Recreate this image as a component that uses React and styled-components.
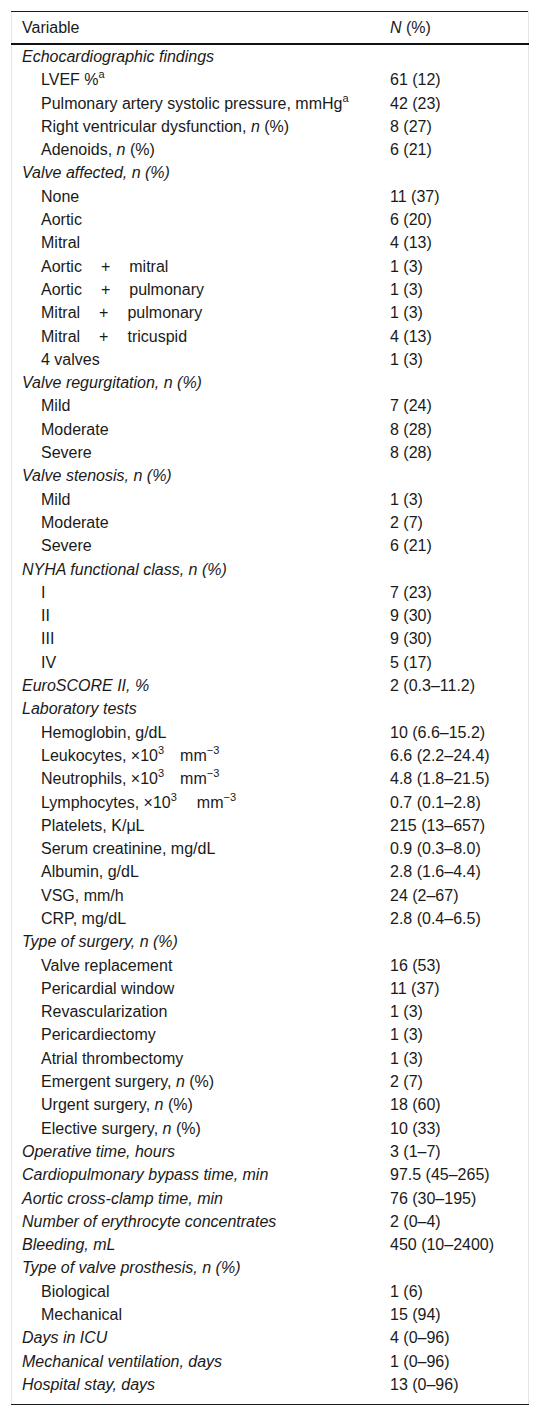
import React from 'react';
import styled, {createGlobalStyle} from 'styled-components';

const Global = createGlobalStyle`
  body {
    margin: 0;
    background: #fff;
    font-family: "Liberation Sans", Arial, sans-serif;
    color: #1a1a1a;
  }
`;

const Wrap = styled.div`
  padding: 11px 11px 10px;
`;

const Table = styled.table`
  width: 100%;
  table-layout: fixed;
  border-collapse: collapse;
  border-left: 1px solid #e6e6e6;
  border-right: 1px solid #e6e6e6;
  border-top: 1px solid #1a1a1a;
  border-bottom: 1px solid #1a1a1a;
  font-size: 16px;
`;

const Head = styled.thead`
  border-bottom: 2px solid #111;
`;

const HeadCell = styled.th`
  text-align: left;
  font-weight: normal;
  padding: 6px 10px;
  line-height: 19px;
  width: ${p => p.$w || 'auto'};
`;

const Row = styled.tr`
  &:last-child td {
    padding-bottom: 10px;
  }
`;

const Cell = styled.td`
  padding: 2px 10px 2px ${p => (p.$indent ? 29 : 10)}px;
  line-height: 19.3px;
  font-style: ${p => (p.$italic ? 'italic' : 'normal')};
  white-space: nowrap;
  vertical-align: top;
`;

const Sup = styled.sup`
  font-size: 11px;
  line-height: 0;
  vertical-align: 7px;
`;

const Gap = styled.span`
  display: inline-block;
  margin: 0 ${p => p.$w || 19}px;
`;

const N = styled.i``;

const n = <N>n</N>;

const rows = [
  {g: 'Echocardiographic findings'},
  {l: <>LVEF %<Sup>a</Sup></>, v: '61 (12)'},
  {l: <>Pulmonary artery systolic pressure, mmHg<Sup>a</Sup></>, v: '42 (23)'},
  {l: <>Right ventricular dysfunction, {n} (%)</>, v: '8 (27)'},
  {l: <>Adenoids, {n} (%)</>, v: '6 (21)'},
  {g: 'Valve affected, n (%)'},
  {l: 'None', v: '11 (37)'},
  {l: 'Aortic', v: '6 (20)'},
  {l: 'Mitral', v: '4 (13)'},
  {l: <>Aortic<Gap>+</Gap>mitral</>, v: '1 (3)'},
  {l: <>Aortic<Gap>+</Gap>pulmonary</>, v: '1 (3)'},
  {l: <>Mitral<Gap>+</Gap>pulmonary</>, v: '1 (3)'},
  {l: <>Mitral<Gap>+</Gap>tricuspid</>, v: '4 (13)'},
  {l: '4 valves', v: '1 (3)'},
  {g: 'Valve regurgitation, n (%)'},
  {l: 'Mild', v: '7 (24)'},
  {l: 'Moderate', v: '8 (28)'},
  {l: 'Severe', v: '8 (28)'},
  {g: 'Valve stenosis, n (%)'},
  {l: 'Mild', v: '1 (3)'},
  {l: 'Moderate', v: '2 (7)'},
  {l: 'Severe', v: '6 (21)'},
  {g: 'NYHA functional class, n (%)'},
  {l: 'I', v: '7 (23)'},
  {l: 'II', v: '9 (30)'},
  {l: 'III', v: '9 (30)'},
  {l: 'IV', v: '5 (17)'},
  {g: 'EuroSCORE II, %', v: '2 (0.3–11.2)'},
  {g: 'Laboratory tests'},
  {l: 'Hemoglobin, g/dL', v: '10 (6.6–15.2)'},
  {l: <>Leukocytes, ×10<Sup>3</Sup><Gap $w={8}></Gap>mm<Sup>−3</Sup></>, v: '6.6 (2.2–24.4)'},
  {l: <>Neutrophils, ×10<Sup>3</Sup><Gap $w={8}></Gap>mm<Sup>−3</Sup></>, v: '4.8 (1.8–21.5)'},
  {l: <>Lymphocytes, ×10<Sup>3</Sup><Gap $w={10}></Gap>mm<Sup>−3</Sup></>, v: '0.7 (0.1–2.8)'},
  {l: 'Platelets, K/μL', v: '215 (13–657)'},
  {l: 'Serum creatinine, mg/dL', v: '0.9 (0.3–8.0)'},
  {l: 'Albumin, g/dL', v: '2.8 (1.6–4.4)'},
  {l: 'VSG, mm/h', v: '24 (2–67)'},
  {l: 'CRP, mg/dL', v: '2.8 (0.4–6.5)'},
  {g: 'Type of surgery, n (%)'},
  {l: 'Valve replacement', v: '16 (53)'},
  {l: 'Pericardial window', v: '11 (37)'},
  {l: 'Revascularization', v: '1 (3)'},
  {l: 'Pericardiectomy', v: '1 (3)'},
  {l: 'Atrial thrombectomy', v: '1 (3)'},
  {l: <>Emergent surgery, {n} (%)</>, v: '2 (7)'},
  {l: <>Urgent surgery, {n} (%)</>, v: '18 (60)'},
  {l: <>Elective surgery, {n} (%)</>, v: '10 (33)'},
  {g: 'Operative time, hours', v: '3 (1–7)'},
  {g: 'Cardiopulmonary bypass time, min', v: '97.5 (45–265)'},
  {g: 'Aortic cross-clamp time, min', v: '76 (30–195)'},
  {g: 'Number of erythrocyte concentrates', v: '2 (0–4)'},
  {g: 'Bleeding, mL', v: '450 (10–2400)'},
  {g: 'Type of valve prosthesis, n (%)'},
  {l: 'Biological', v: '1 (6)'},
  {l: 'Mechanical', v: '15 (94)'},
  {g: 'Days in ICU', v: '4 (0–96)'},
  {g: 'Mechanical ventilation, days', v: '1 (0–96)'},
  {g: 'Hospital stay, days', v: '13 (0–96)'},
];

export default function App() {
  return (
    <Wrap>
      <Global />
      <Table>
        <Head>
          <tr>
            <HeadCell $w="348px">Variable</HeadCell>
            <HeadCell><N>N</N> (%)</HeadCell>
          </tr>
        </Head>
        <tbody>
          {rows.map((r, i) => (
            <Row key={i}>
              {r.g
                ? <Cell $italic>{r.g}</Cell>
                : <Cell $indent>{r.l}</Cell>}
              <Cell>{r.v || ''}</Cell>
            </Row>
          ))}
        </tbody>
      </Table>
    </Wrap>
  );
}
